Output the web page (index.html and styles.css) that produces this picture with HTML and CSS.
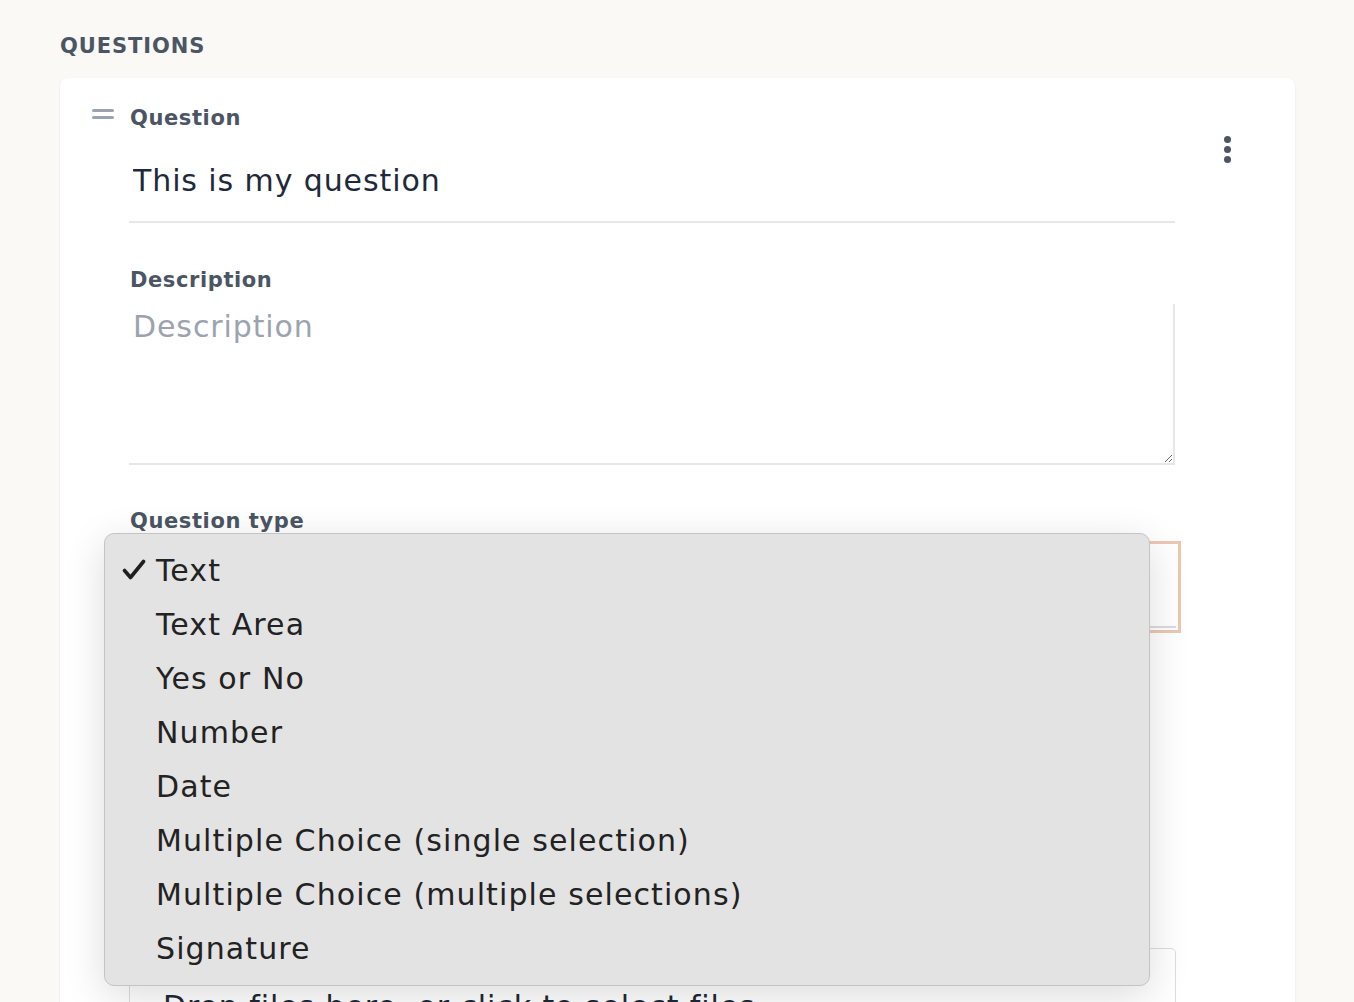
FILE: index.html
```html
<!DOCTYPE html>
<html lang="en">
<head>
  <meta charset="UTF-8" />
  <title>Questions</title>
  <link rel="stylesheet" href="styles.css">
</head>
<body>
  <main class="page">
    <h2 class="section-title">QUESTIONS</h2>

    <div class="question-card">
      <div class="drag-handle"><span></span><span></span></div>

      <div class="question-body">
        <label class="field-label" for="question">Question</label>
        <input class="question-input" id="question" type="text" value="This is my question">

        <label class="field-label desc-label" for="description">Description</label>
        <textarea class="desc-input" id="description" placeholder="Description"></textarea>

        <div class="type-field">
          <label class="field-label">Question type</label>
          <div class="type-select"></div>

          <ul class="type-menu">
            <li class="type-option">
              <svg class="check" viewBox="0 0 24 24" width="24" height="24">
                <path d="M2.5 12.5 L8.5 19.5 L21.5 3.5" fill="none" stroke="#1f1f1f" stroke-width="3.6" stroke-linecap="round" stroke-linejoin="round"/>
              </svg>
              <span>Text</span>
            </li>
            <li class="type-option"><i class="check"></i><span>Text Area</span></li>
            <li class="type-option"><i class="check"></i><span>Yes or No</span></li>
            <li class="type-option"><i class="check"></i><span>Number</span></li>
            <li class="type-option"><i class="check"></i><span>Date</span></li>
            <li class="type-option"><i class="check"></i><span>Multiple Choice (single selection)</span></li>
            <li class="type-option"><i class="check"></i><span>Multiple Choice (multiple selections)</span></li>
            <li class="type-option"><i class="check"></i><span>Signature</span></li>
          </ul>
        </div>

        <div class="dropzone">Drop files here, or click to select files</div>
      </div>

      <button class="kebab" type="button"><span></span><span></span><span></span></button>
    </div>
  </main>
</body>
</html>
```

FILE: styles.css
```css
html, body {
  margin: 0;
  background: #faf9f6;
  font-family: "DejaVu Sans", sans-serif;
  color: #4b5563;
}
.page {
  padding: 34px 59px 0 60px;
}
.section-title {
  margin: 0;
  font-size: 21px;
  line-height: 24px;
  font-weight: 600;
  letter-spacing: 0.9px;
  color: #4b5563;
}
.question-card {
  margin-top: 20px;
  background: #fff;
  border-radius: 8px;
  box-shadow: 0 1px 3px rgba(0,0,0,0.08);
  padding: 28px 32px 0 32px;
  display: grid;
  grid-template-columns: 22px 1046px 1fr;
  column-gap: 16px;
  align-items: start;
}
.drag-handle {
  margin-top: 3px;
  display: flex;
  flex-direction: column;
  gap: 4px;
}
.drag-handle span {
  display: block;
  height: 3px;
  border-radius: 2px;
  background: #9ca3af;
}
.field-label {
  display: block;
  font-size: 21px;
  line-height: 24px;
  font-weight: 600;
  letter-spacing: 0.6px;
  color: #4b5563;
}
.question-input {
  display: block;
  box-sizing: border-box;
  width: 100%;
  margin: 10px 0 0 -1px;
  padding: 18px 4px;
  height: 83px;
  border: none;
  border-bottom: 2px solid #e5e7eb;
  font-family: inherit;
  font-size: 30px;
  line-height: 45px;
  letter-spacing: 0.9px;
  color: #1e293b;
  outline: none;
}
.desc-label {
  margin-top: 45px;
}
.desc-input {
  display: block;
  box-sizing: border-box;
  width: 100%;
  height: 161px;
  margin: 12px 0 0 -1px;
  padding: 5px 4px;
  border: none;
  border-right: 2px solid #e5e7eb;
  border-bottom: 2px solid #e5e7eb;
  font-family: inherit;
  font-size: 30px;
  line-height: 36px;
  letter-spacing: 0.9px;
  color: #1e293b;
  outline: none;
}
.desc-input::placeholder {
  color: #9ca3af;
}
.type-field {
  position: relative;
  margin-top: 44px;
}
.type-select {
  box-sizing: border-box;
  height: 82px;
  margin: 13px 0 0 -1px;
  border-bottom: 2px solid #d9dbe0;
  outline: 3px solid #ecc7b4;
  outline-offset: 2px;
}
.type-menu {
  position: absolute;
  top: 24px;
  left: -26px;
  width: 1046px;
  box-sizing: border-box;
  margin: 0;
  padding: 9px 0 10px;
  list-style: none;
  background: #e3e3e3;
  border: 1px solid #c4c4c4;
  border-radius: 10px;
  box-shadow: 0 10px 40px rgba(0,0,0,0.14);
  z-index: 5;
}
.type-option {
  display: flex;
  align-items: center;
  gap: 10px;
  height: 54px;
  padding-left: 17px;
  font-size: 30px;
  letter-spacing: 1.1px;
  color: #222;
}
.check {
  display: block;
  width: 24px;
  height: 24px;
  flex: none;
}
.dropzone {
  box-sizing: border-box;
  margin: 320px 0 0 -1px;
  height: 140px;
  padding: 40px 33px;
  border: 1px solid #dcdde1;
  border-radius: 5px;
  font-size: 30px;
  letter-spacing: 0.9px;
  color: #1f2937;
}
.kebab {
  justify-self: center;
  margin-top: 30px;
  padding: 0;
  border: none;
  background: none;
  display: flex;
  flex-direction: column;
  gap: 3px;
  cursor: pointer;
}
.kebab span {
  display: block;
  width: 7px;
  height: 7px;
  border-radius: 50%;
  background: #4b5563;
}
```
